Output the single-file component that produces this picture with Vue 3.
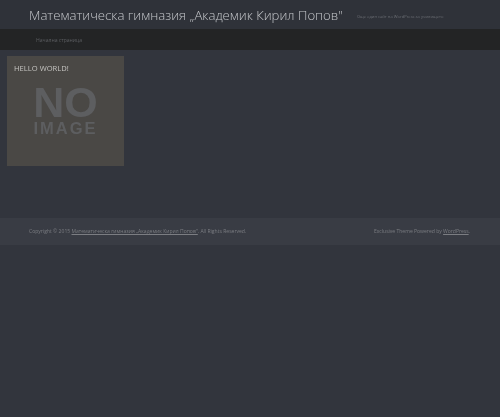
<script setup>
const title = 'Математическа гимназия „Академик Кирил Попов"'
</script>

<template>
  <div class="page">
    <header class="top">
      <h1 class="title">{{ title }}</h1>
      <span class="tagline">Още един сайт на WordPress за училището</span>
    </header>
    <nav class="nav"><a class="nav-link">Начална страница</a></nav>
    <main class="main">
      <article class="card">
        <h2 class="card-title">HELLO WORLD!</h2>
        <div class="noimage">
          <div class="no">NO</div>
          <div class="image">IMAGE</div>
        </div>
      </article>
    </main>
    <footer class="foot">
      <span class="copy">Copyright © 2015 <u>Математическа гимназия „Академик Кирил Попов"</u>. All Rights Reserved.</span>
      <span class="credit">Exclusive Theme Powered by <u>WordPress</u>.</span>
    </footer>
  </div>
</template>

<style>
html, body { margin: 0; background: #32353d; }
</style>

<style scoped>
.page {
  width: 500px;
  height: 417px;
  overflow: hidden;
  background: #32353d;
  font-family: "Open Sans", "Liberation Sans", sans-serif;
  display: flex;
  flex-direction: column;
}
.top {
  height: 29px;
  display: flex;
  align-items: center;
  padding-left: 29px;
  gap: 14px;
  background: #2f3239;
}
.title {
  margin: 1px 0 0;
  font-size: 13.2px;
  font-weight: 300;
  color: #c4c6ca;
  white-space: nowrap;
  filter: blur(0.5px);
}
.tagline {
  margin-top: 3px;
  font-size: 4.1px;
  color: #6a6d73;
  white-space: nowrap;
  filter: blur(0.4px);
}
.nav {
  height: 21px;
  display: flex;
  align-items: center;
  padding-left: 36px;
  background: #232425;
}
.nav-link {
  font-size: 5.1px;
  color: #5c5e62;
  white-space: nowrap;
  filter: blur(0.5px);
}
.main {
  height: 168px;
  padding: 6px 0 0 7px;
  box-sizing: border-box;
}
.card {
  width: 117px;
  height: 110px;
  box-sizing: border-box;
  padding-top: 7px;
  background: #4a4845;
  display: flex;
  flex-direction: column;
}
.card-title {
  margin: 0 0 0 7px;
  font-size: 7.6px;
  line-height: 10px;
  font-weight: 400;
  color: #c4c3c0;
  filter: blur(0.4px);
}
.noimage {
  margin-top: 12px;
  display: flex;
  flex-direction: column;
  align-items: center;
  font-family: "Liberation Sans", sans-serif;
  font-weight: 700;
  color: #5d5e60;
  filter: blur(0.7px);
}
.no {
  font-size: 43px;
  line-height: 34px;
  height: 34px;
}
.image {
  font-size: 16.5px;
  line-height: 14px;
  height: 14px;
  letter-spacing: 2px;
  margin-top: 2px;
}
.foot {
  height: 27px;
  display: flex;
  align-items: center;
  justify-content: space-between;
  padding: 0 30px 0 29px;
  background: #393c44;
  font-size: 5.05px;
  color: #7b7d82;
  white-space: nowrap;
}
.copy, .credit {
  margin-top: -1px;
  filter: blur(0.5px);
}
</style>
